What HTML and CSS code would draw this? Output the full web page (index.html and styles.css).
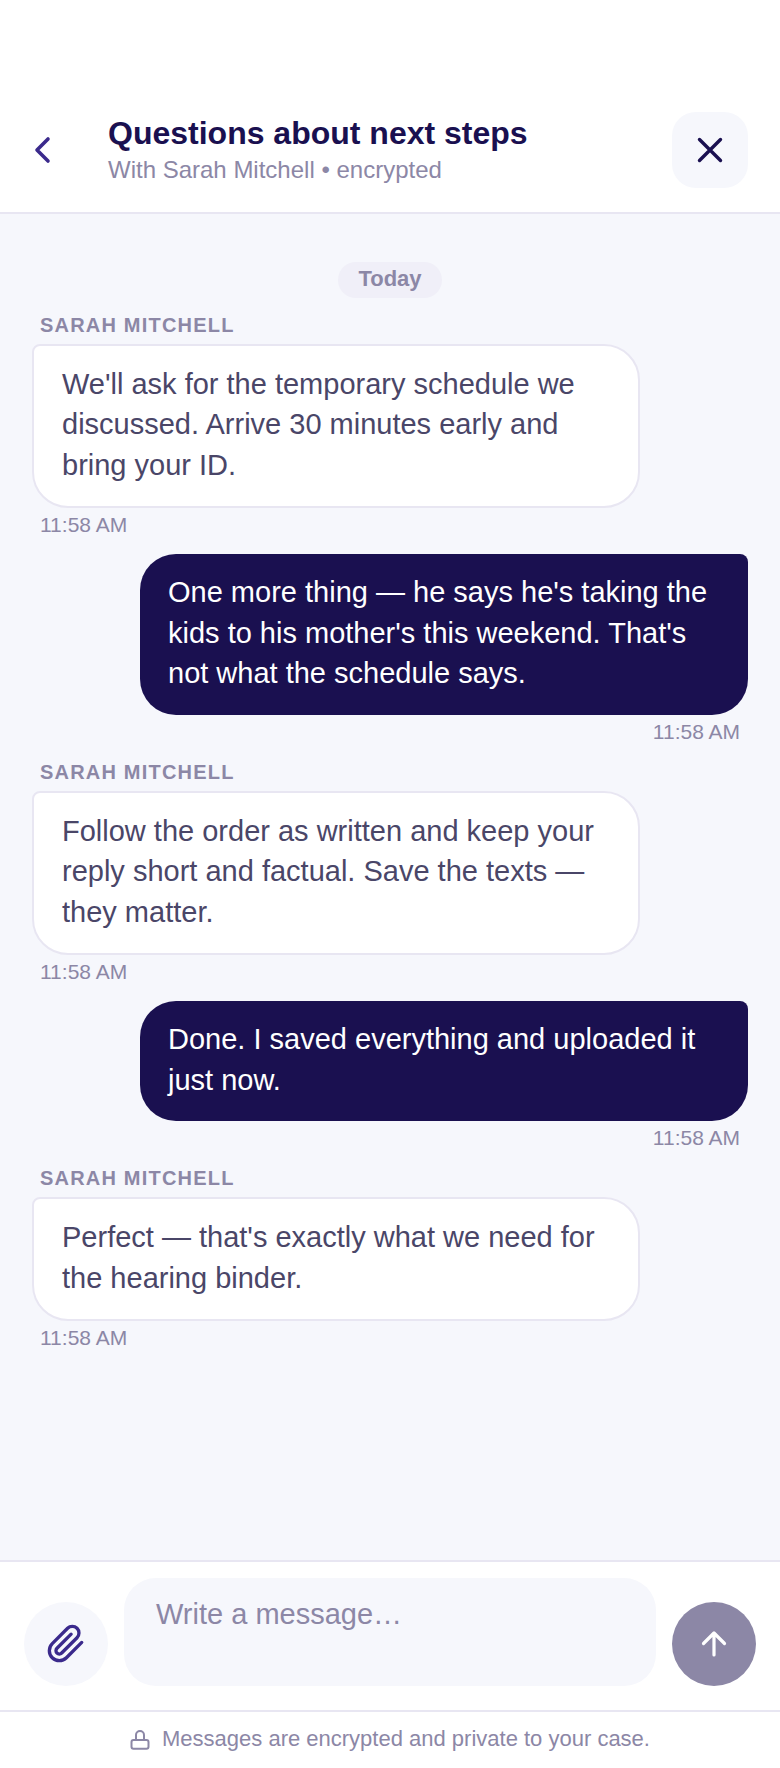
FILE: index.html
```html
<!DOCTYPE html>
<html>
<head>
  <title>Questions about next steps</title>
  <link rel="stylesheet" href="styles.css">
</head>
<body>
  <div class="screen">
    <header class="top">
      <button class="back" aria-label="Back">
        <svg width="24" height="32" viewBox="0 0 24 32"><path d="M18 5 7 16l11 11"/></svg>
      </button>
      <div class="heading">
        <h1>Questions about next steps</h1>
        <p>With Sarah Mitchell • encrypted</p>
      </div>
      <button class="close" aria-label="Close">
        <svg width="28" height="28" viewBox="0 0 28 28"><path d="M3.500 3.500l21 21M24.500 3.500l-21 21"/></svg>
      </button>
    </header>

    <main class="thread">
      <div class="day"><span>Today</span></div>

      <div class="msg them">
        <div class="name">SARAH MITCHELL</div>
        <div class="bubble">We'll ask for the temporary schedule we discussed. Arrive 30 minutes early and bring your ID.</div>
        <div class="time">11:58 AM</div>
      </div>

      <div class="msg me">
        <div class="bubble">One more thing — he says he's taking the kids to his mother's this weekend. That's not what the schedule says.</div>
        <div class="time">11:58 AM</div>
      </div>

      <div class="msg them">
        <div class="name">SARAH MITCHELL</div>
        <div class="bubble">Follow the order as written and keep your reply short and factual. Save the texts — they matter.</div>
        <div class="time">11:58 AM</div>
      </div>

      <div class="msg me">
        <div class="bubble">Done. I saved everything and uploaded it just now.</div>
        <div class="time">11:58 AM</div>
      </div>

      <div class="msg them">
        <div class="name">SARAH MITCHELL</div>
        <div class="bubble">Perfect — that's exactly what we need for the hearing binder.</div>
        <div class="time">11:58 AM</div>
      </div>
    </main>

    <div class="composer">
      <button class="attach" aria-label="Attach">
        <svg width="40" height="40" viewBox="0 0 24 24"><path d="M21.44 11.05l-9.19 9.19a6 6 0 0 1-8.49-8.49l9.19-9.19a4 4 0 0 1 5.66 5.66l-9.2 9.19a2 2 0 0 1-2.83-2.83l8.49-8.48"/></svg>
      </button>
      <div class="input">Write a message…</div>
      <button class="send" aria-label="Send">
        <svg width="32" height="32" viewBox="0 0 32 32"><path d="M16 27V5M5.500 15.500 16 5l10.500 10.500"/></svg>
      </button>
    </div>

    <footer class="note">
      <svg width="24" height="24" viewBox="0 0 24 24"><rect x="3.500" y="13" width="17" height="8.700" rx="2"/><path d="M8 13V8a4 4 0 0 1 8 0v5"/></svg>
      <span>Messages are encrypted and private to your case.</span>
    </footer>
  </div>
</body>
</html>
```

FILE: styles.css
```css
* {
  box-sizing: border-box;
}
html, body {
  margin: 0;
  padding: 0;
}
body {
  font-family: "Liberation Sans", Arial, sans-serif;
  background-color: #fff;
}
button {
  border: 0;
  padding: 0;
  display: flex;
  align-items: center;
  justify-content: center;
}
svg {
  fill: none;
  stroke-linecap: round;
  stroke-linejoin: round;
}
.screen {
  width: 780px;
  height: 1768px;
  display: flex;
  flex-direction: column;
}

.top {
  height: 214px;
  padding: 112px 32px 24px 0;
  display: flex;
  align-items: flex-start;
  background-color: #fff;
  border-bottom: 2px solid #e8e6f2;
}
.back {
  width: 84px;
  height: 76px;
  background: none;
  flex: none;
}
.back svg {
  stroke: #3b2a8c;
  stroke-width: 3.6;
}
.heading {
  flex: 1;
  padding-left: 24px;
}
.heading h1 {
  margin: 0;
  font-size: 32px;
  line-height: 42px;
  font-weight: 700;
  color: #1a1050;
}
.heading p {
  margin: 0;
  font-size: 24px;
  line-height: 32px;
  color: #8c87a6;
}
.close {
  width: 76px;
  height: 76px;
  border-radius: 24px;
  background-color: #f6f7fc;
  flex: none;
}
.close svg {
  stroke: #1a1050;
  stroke-width: 3.4;
}

.thread {
  flex: 1;
  padding: 48px 32px 0;
  background-color: #f6f7fc;
}
.day {
  display: flex;
  justify-content: center;
  margin-bottom: 16px;
}
.day span {
  height: 36px;
  padding: 0 20px;
  border-radius: 18px;
  background-color: #f0eff8;
  color: #8c87a6;
  font-size: 22px;
  line-height: 34px;
  font-weight: 700;
}
.msg {
  margin-bottom: 16px;
  display: flex;
  flex-direction: column;
}
.name {
  padding-left: 8px;
  margin-bottom: 8px;
  font-size: 20px;
  line-height: 22px;
  font-weight: 700;
  letter-spacing: 1.2px;
  color: #8c87a6;
}
.bubble {
  width: 608px;
  padding: 18px 28px 21.400px;
  font-size: 29px;
  line-height: 40.350px;
}
.time {
  margin-top: 4px;
  padding: 0 8px;
  font-size: 21px;
  line-height: 26px;
  color: #8c87a6;
}
.them .bubble {
  border: 2px solid #e8e6f2;
  border-radius: 8px 36px 36px 36px;
  background-color: #fff;
  color: #4a4668;
}
.me {
  align-items: flex-end;
}
.me .bubble {
  border-radius: 36px 8px 36px 36px;
  background-color: #1a1050;
  color: #fff;
}

.composer {
  height: 150px;
  padding: 16px 24px 24px;
  display: flex;
  align-items: flex-end;
  gap: 16px;
  background-color: #fff;
  border-top: 2px solid #e8e6f2;
}
.attach, .send {
  width: 84px;
  height: 84px;
  border-radius: 50%;
  flex: none;
}
.attach {
  background-color: #f6f7fc;
}
.attach svg {
  stroke: #3b2a8c;
  stroke-width: 2;
}
.input {
  flex: 1;
  height: 108px;
  padding: 18px 32px;
  border-radius: 32px;
  background-color: #f6f7fc;
  color: #8c87a6;
  font-size: 29px;
  line-height: 36px;
}
.send {
  background-color: #8c87a6;
}
.send svg {
  stroke: #fff;
  stroke-width: 3.2;
}

.note {
  height: 58px;
  padding: 0 2px 2px 0;
  display: flex;
  align-items: center;
  justify-content: center;
  gap: 10px;
  background-color: #fff;
  border-top: 2px solid #e8e6f2;
  color: #8c87a6;
  font-size: 22px;
}
.note svg {
  stroke: #8c87a6;
  stroke-width: 2;
}
```
